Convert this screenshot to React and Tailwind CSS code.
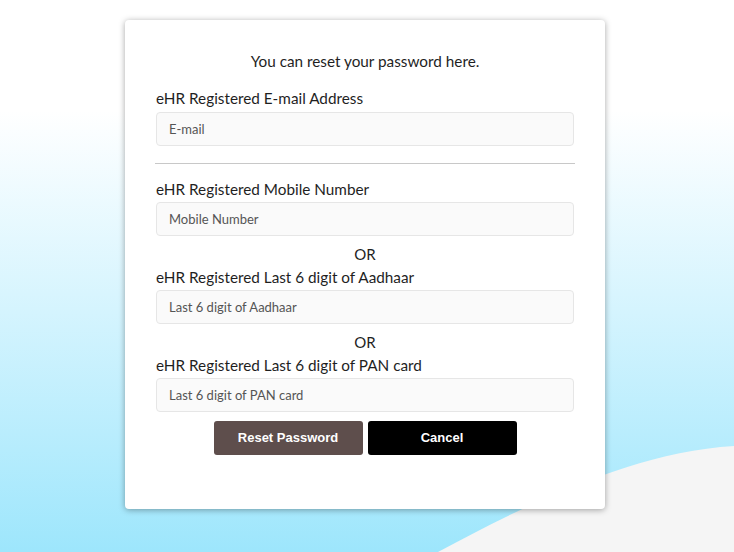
import React from 'react'

const Field = ({ label, placeholder, className = '' }) => (
  <div className={className}>
    <label className="block text-[15.3px] leading-5 text-[#1f1f1f]">{label}</label>
    <input
      type="text"
      placeholder={placeholder}
      className="mt-[3px] block h-[34px] w-full rounded-[4px] border border-[#e6e6e6] bg-[#fafafa] px-[12px] text-[13px] text-[#333] placeholder:text-[#555] outline-none"
    />
  </div>
)

const Or = () => (
  <p className="mt-[8px] text-center text-[15px] leading-5 text-[#1f1f1f]">OR</p>
)

const App = () => {
  return (
    <div
      className="relative h-[552px] w-full overflow-hidden bg-linear-to-b from-white from-[20%] to-[#9de6fc]"
      style={{ fontFamily: 'Lato, "Noto Sans", sans-serif' }}
    >
      <svg
        className="absolute bottom-0 left-0"
        width="734"
        height="130"
        viewBox="0 422 734 130"
        preserveAspectRatio="none"
      >
        <path d="M438 552 C 520 508, 630 452, 734 446 L734 552 Z" fill="#f5f5f5" />
      </svg>

      <div className="relative z-10 pt-[20px]">
        <div className="ml-[125px] w-[480px] rounded-[4px] bg-white px-[31px] pt-[31px] pb-[54px] shadow-[0_1px_6px_rgba(0,0,0,0.35)]">
          <h2 className="text-center text-[15.3px] leading-5 text-[#1f1f1f]">
            You can reset your password here.
          </h2>

          <Field
            className="mt-[17px] [&_input]:mt-[4px]"
            label="eHR Registered E-mail Address"
            placeholder="E-mail"
          />

          <hr className="mt-[17px] border-0 border-t border-[#c8c8c8] -mx-[1px]" />

          <Field
            className="mt-[15px]"
            label="eHR Registered Mobile Number"
            placeholder="Mobile Number"
          />
          <Or />
          <Field
            className="mt-[3px]"
            label="eHR Registered Last 6 digit of Aadhaar"
            placeholder="Last 6 digit of Aadhaar"
          />
          <Or />
          <Field
            className="mt-[3px]"
            label="eHR Registered Last 6 digit of PAN card"
            placeholder="Last 6 digit of PAN card"
          />

          <div
            className="mt-[9px] flex justify-center gap-[5px]"
            style={{ fontFamily: '"Liberation Sans", Arial, sans-serif' }}
          >
            <button className="h-[34px] w-[149px] rounded-[3px] bg-[#5e4e4c] text-[13px] font-bold text-white">
              Reset Password
            </button>
            <button className="h-[34px] w-[149px] rounded-[3px] bg-black text-[13px] font-bold text-white">
              Cancel
            </button>
          </div>
        </div>
      </div>
    </div>
  )
}

export default App
